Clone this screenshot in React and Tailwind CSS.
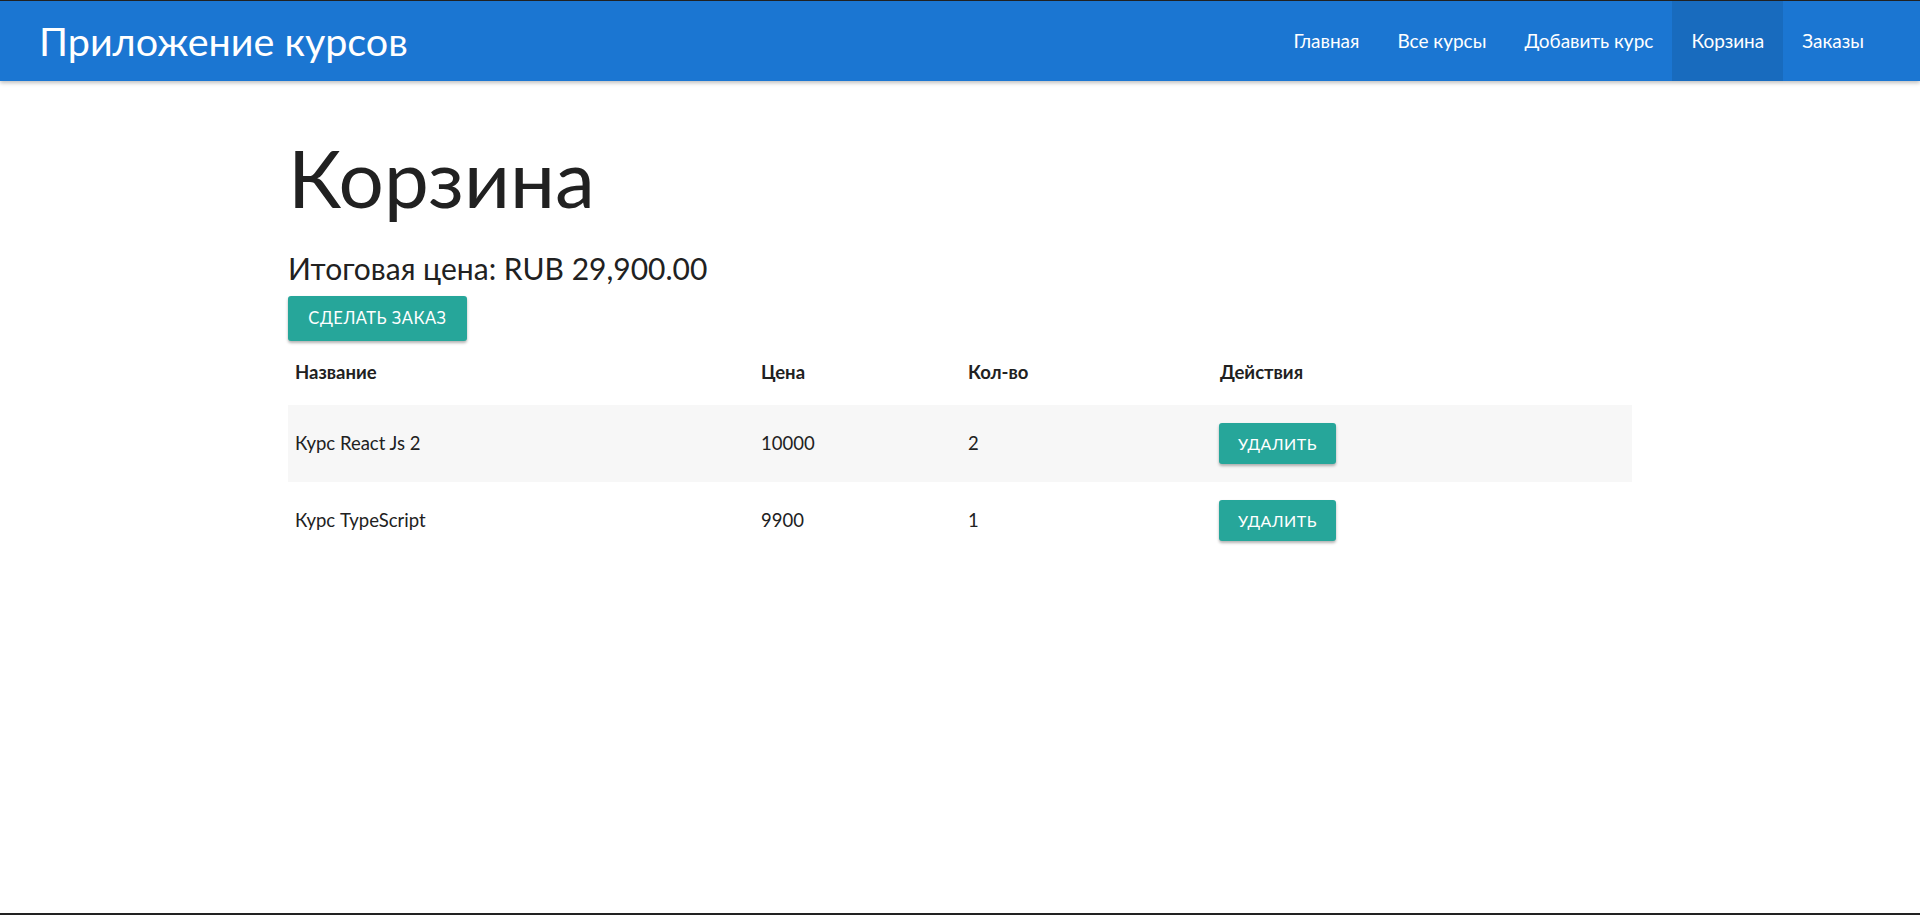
import React from "react";

const NAV = ["Главная", "Все курсы", "Добавить курс", "Корзина", "Заказы"];

const ITEMS = [
  { title: "Курс React Js 2", price: 10000, count: 2 },
  { title: "Курс TypeScript", price: 9900, count: 1 },
];

const font = { fontFamily: 'Lato, "Noto Sans", sans-serif' };

export default function App() {
  return (
    <div className="h-screen flex flex-col bg-white text-[#212121]" style={font}>
      <div className="h-px bg-[#222]" />

      {/* Navbar */}
      <nav className="h-[80px] bg-[#1b76d2] flex items-center justify-between shadow-[0_2px_4px_rgba(0,0,0,0.25)] relative z-10">
        <a className="pl-[39px] text-[39.5px] text-white leading-none">Приложение курсов</a>
        <ul className="flex h-full mr-[37px]">
          {NAV.map(n => (
            <li key={n}
              className={`h-full flex items-center px-[19px] text-[19px] text-white ${n === "Корзина" ? "bg-[#186bbe]" : ""}`}>
              {n}
            </li>
          ))}
        </ul>
      </nav>

      {/* Content */}
      <main className="flex-1 w-[1344px] mx-auto">
        <h1 className="mt-[52px] text-[80px] leading-[1.1] font-normal">Корзина</h1>
        <p className="mt-[31px] text-[30px] leading-[1.1]">Итоговая цена: RUB 29,900.00</p>
        <button className="mt-[11px] h-[45px] w-[179px] bg-[#26a69a] text-white text-[16.5px] tracking-[0.5px] uppercase rounded-[3px] shadow-[0_2px_3px_rgba(0,0,0,0.3)]">
          Сделать заказ
        </button>

        <table className="w-full table-fixed border-collapse text-[18.5px]">
          <thead>
            <tr className="h-[64px]">
              <th className="w-[466px] text-left font-bold pl-[7px]">Название</th>
              <th className="w-[207px] text-left font-bold pl-[7px]">Цена</th>
              <th className="w-[252px] text-left font-bold pl-[7px]">Кол-во</th>
              <th className="text-left font-bold pl-[7px]">Действия</th>
            </tr>
          </thead>
          <tbody>
            {ITEMS.map((it, i) => (
              <tr key={i} className={`h-[77px] ${i % 2 === 0 ? "bg-[#f7f7f7]" : ""}`}>
                <td className="pl-[7px]">{it.title}</td>
                <td className="pl-[7px]">{it.price}</td>
                <td className="pl-[7px]">{it.count}</td>
                <td className="pl-[6px]">
                  <button className="h-[41px] w-[117px] bg-[#26a69a] text-white text-[16px] tracking-[0.5px] uppercase rounded-[3px] shadow-[0_2px_3px_rgba(0,0,0,0.3)]">
                    Удалить
                  </button>
                </td>
              </tr>
            ))}
          </tbody>
        </table>
      </main>

      <div className="h-[2px] bg-[#222]" />
    </div>
  );
}
